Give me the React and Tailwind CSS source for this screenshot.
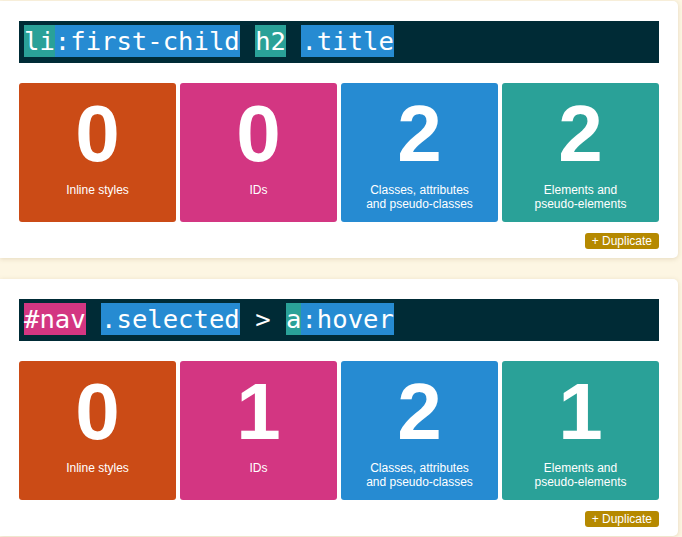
import React from "react";

const tileColors = ["bg-[#cb4b16]", "bg-[#d33682]", "bg-[#268bd2]", "bg-[#2aa198]"];
const labels = [
  ["Inline styles"],
  ["IDs"],
  ["Classes, attributes", "and pseudo-classes"],
  ["Elements and", "pseudo-elements"],
];

function Seg({ c, children }) {
  const bg = c === "t" ? "bg-[#2aa198]" : c === "b" ? "bg-[#268bd2]" : c === "p" ? "bg-[#d33682]" : "";
  return <span className={`inline-block align-top ${bg}`}>{children}</span>;
}

function Card({ selector, counts }) {
  return (
    <div className="w-[678px] bg-white rounded-r-[5px] shadow-[0_1px_5px_rgba(120,90,30,0.18)] pl-[19px] pr-[19px] pt-[20px] pb-[9px]">
      <div className="bg-[#002b36] pl-[5px] pr-[5px] pt-[4px] pb-[6px] text-white whitespace-pre text-[25.6px] leading-[32px] [font-family:'DejaVu_Sans_Mono',monospace]">
        {selector}
      </div>
      <div className="grid grid-cols-4 gap-[4px] mt-[20px]">
        {counts.map((n, i) => (
          <div
            key={i}
            className={`${tileColors[i]} h-[139px] rounded-[3px] flex flex-col items-center pt-[11px] text-white [font-family:'Liberation_Sans',Arial,sans-serif]`}
          >
            <div className="text-[80px] leading-none font-bold">{n}</div>
            <div className="mt-[9px] text-[12px] leading-[14px] text-center">
              {labels[i].map((l, j) => (
                <div key={j}>{l}</div>
              ))}
            </div>
          </div>
        ))}
      </div>
      <div className="flex justify-end mt-[11px]">
        <button className="h-[16px] px-[7px] rounded-[3px] bg-[#b58900] text-white text-[12px] leading-[16px] [font-family:'Liberation_Sans',Arial,sans-serif]">
          + Duplicate
        </button>
      </div>
    </div>
  );
}

export default function App() {
  return (
    <div className="min-h-[537px] bg-[#fdf6e3] pt-px flex flex-col gap-[21px] overflow-hidden">
      <Card
        selector={
          <>
            <Seg c="t">li</Seg>
            <Seg c="b">:first-child</Seg>
            {" "}
            <Seg c="t">h2</Seg>
            {" "}
            <Seg c="b">.title</Seg>
          </>
        }
        counts={[0, 0, 2, 2]}
      />
      <Card
        selector={
          <>
            <Seg c="p">#nav</Seg>
            {" "}
            <Seg c="b">.selected</Seg>
            {" > "}
            <Seg c="t">a</Seg>
            <Seg c="b">:hover</Seg>
          </>
        }
        counts={[0, 1, 2, 1]}
      />
    </div>
  );
}
